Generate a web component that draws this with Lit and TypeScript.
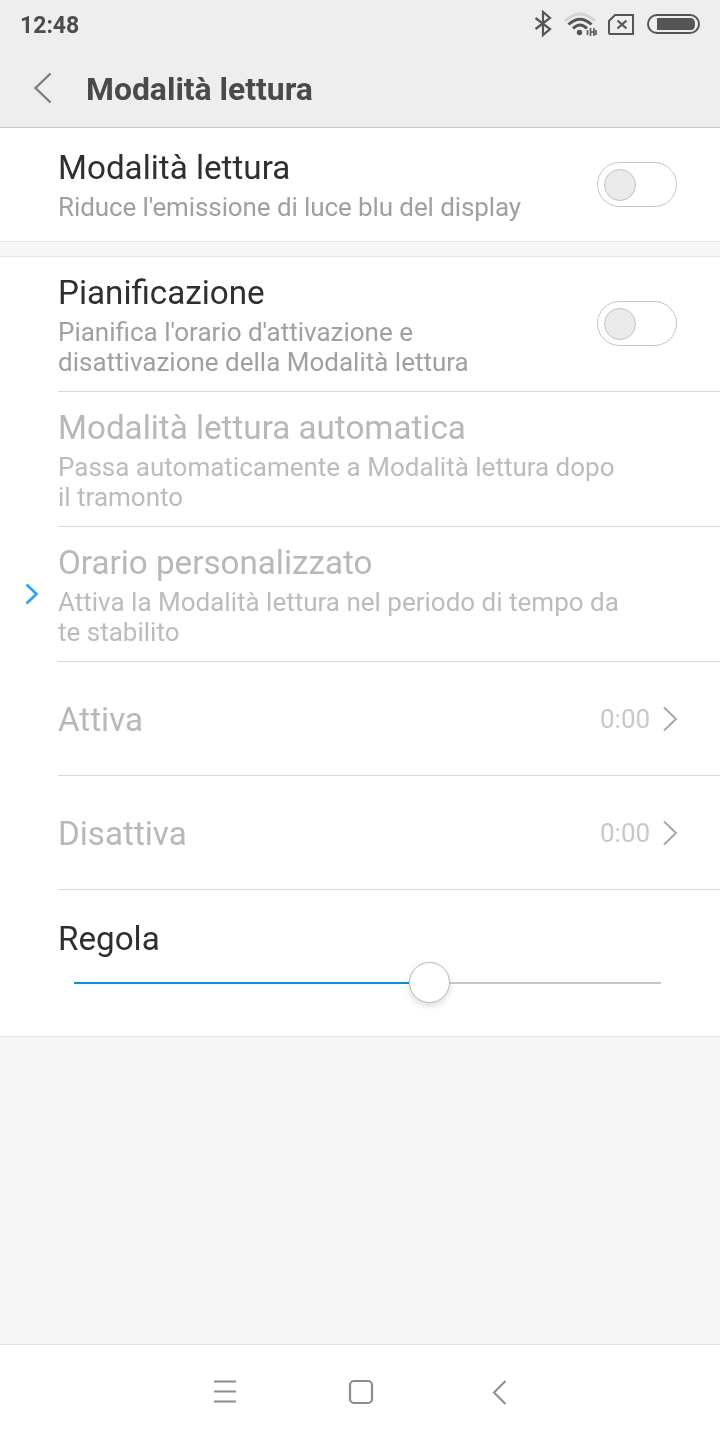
import { LitElement, html, css } from "lit";
import { customElement } from "lit/decorators.js";

const chevron = html`<svg class="chev" width="16" height="26" viewBox="0 0 16 26"><path d="M2 1.500L14 13 2 24.500" fill="none" stroke="#a8a8a8" stroke-width="2"/></svg>`;
const toggle = html`<div class="toggle"><div class="knob"></div></div>`;

@customElement("app-root")
export class AppRoot extends LitElement {
  static styles = css`
    :host { display: flex; flex-direction: column; width: 720px; height: 1440px; background: #f7f7f7; font-family: Roboto, sans-serif; overflow: hidden; }
    .top { height: 127px; background: #eeeeee; border-bottom: 1px solid #c8c8c8; display: flex; flex-direction: column; flex: none; }
    .status { height: 50px; display: flex; align-items: center; padding: 0 20px; justify-content: space-between; }
    .time { font-size: 23px; font-weight: 700; color: #4c4c4c; will-change: transform; }
    .sicons { display: flex; align-items: center; }
    .bar { height: 77px; display: flex; align-items: center; padding-left: 32px; }
    .bar svg { margin-right: 32px; margin-top: -2px; }
    .bar h1 { margin: 0; font-size: 31.900px; font-weight: 700; color: #4a4a4a; will-change: transform; }
    .card { background: #fff; flex: none; }
    .card.a { border-bottom: 1px solid #e6e6e6; }
    .card.b { margin-top: 14px; border-top: 1px solid #e6e6e6; border-bottom: 1px solid #e6e6e6; }
    .row { position: relative; display: flex; align-items: center; padding-left: 58px; padding-right: 43px; box-sizing: border-box; }
    .row::after { content: ""; position: absolute; left: 58px; right: 0; bottom: 0; height: 1px; background: #d9d9d9; }
    .row.last::after { display: none; }
    .text { flex: 1; min-width: 0; will-change: transform; }
    .t { font-size: 33.200px; line-height: 36px; color: #2f2f2f; }
    .regola .t { will-change: transform; }
    .s { font-size: 26px; line-height: 30px; color: #a0a0a0; margin-top: 6px; }
    .tight { letter-spacing: -0.100px; }
    .off .t { color: #b8b8b8; }
    .off .s { color: #bcbcbc; }
    .h113 { height: 113px; }
    .h113 .text { padding-top: 3px; }
    .h135 { height: 135px; padding-bottom: 2px; }
    .h135 .text { padding-top: 5px; }
    .h114 { height: 114px; }
    .h114 .text { padding-top: 2px; }
    .toggle { width: 80px; height: 45px; box-sizing: border-box; border: 1px solid #c6c6c6; border-radius: 23px; background: #fff; display: flex; align-items: center; padding-left: 6px; flex: none; }
    .knob { width: 32px; height: 32px; box-sizing: border-box; border-radius: 50%; background: #ebebeb; border: 1px solid #c2c2c2; }
    .val { font-size: 26px; color: #c8c8c8; margin-right: 12px; will-change: transform; }
    .chev { flex: none; margin-right: -1px; }
    .blue { position: absolute; left: 24px; top: 55px; }
    .regola { height: 146px; display: block; padding-top: 31px; padding-right: 0; }
    .track { display: flex; align-items: center; margin: 5px 59px 0 16px; height: 40px; }
    .on { width: 335px; height: 2px; margin-top: 2px; background: #0a8fdc; }
    .thumb { width: 41px; height: 41px; box-sizing: border-box; border-radius: 50%; background: #fff; border: 1px solid #b8b8b8; box-shadow: 0 3px 6px rgba(0,0,0,.14); flex: none; }
    .rest { flex: 1; height: 2px; margin-top: 2px; background: #c6c6c6; }
    .spacer { flex: 1; }
    .nav { flex: none; height: 95px; background: #fff; border-top: 1px solid #e0e0e0; }
  `;

  render() {
    return html`
      <div class="top">
        <div class="status">
          <span class="time">12:48</span>
          <div class="sicons">
            <svg width="167" height="30" viewBox="0 0 167 30">
              <path d="M2.500 8L17 19 10 25V2L17 8 2.500 19" fill="none" stroke="#555" stroke-width="2.200"/>
              <path d="M32 11Q47 -3 62 11" fill="none" stroke="#d4d4d4" stroke-width="3"/>
              <path d="M35.500 14.500Q47 4 58.500 14.500" fill="none" stroke="#555" stroke-width="3"/>
              <path d="M40 18.500Q47 11.500 54 18.500" fill="none" stroke="#555" stroke-width="3"/>
              <circle cx="46.500" cy="22.500" r="2.700" fill="#555"/>
              <path d="M54.500 20v5M57.500 18v8M57.500 22h4M61 18v8M63 20v5" fill="none" stroke="#555" stroke-width="1.600"/>
              <path d="M76 11L82 5H100V24H77Q76 24 76 23Z" fill="none" stroke="#555" stroke-width="2"/>
              <path d="M84.500 10.500l9 8M93.500 10.500l-9 8" fill="none" stroke="#555" stroke-width="2.200"/>
              <rect x="115" y="5" width="51" height="18" rx="9" fill="none" stroke="#555" stroke-width="2"/>
              <path d="M124 8H158Q162 8 162 14Q162 20 158 20H124Z" fill="#555"/>
            </svg>
          </div>
        </div>
        <div class="bar">
          <svg width="22" height="32" viewBox="0 0 22 32"><path d="M18.500 1.500L3.500 16 18.500 30.500" fill="none" stroke="#7a7a7a" stroke-width="2.200"/></svg>
          <h1>Modalità lettura</h1>
        </div>
      </div>

      <div class="card a">
        <div class="row h113 last">
          <div class="text"><div class="t">Modalità lettura</div><div class="s tight">Riduce l'emissione di luce blu del display</div></div>
          ${toggle}
        </div>
      </div>

      <div class="card b">
        <div class="row h135">
          <div class="text"><div class="t">Pianificazione</div><div class="s">Pianifica l'orario d'attivazione e<br>disattivazione della Modalità lettura</div></div>
          ${toggle}
        </div>
        <div class="row h135 off">
          <div class="text"><div class="t">Modalità lettura automatica</div><div class="s">Passa automaticamente a Modalità lettura dopo<br>il tramonto</div></div>
        </div>
        <div class="row h135 off">
          <svg class="blue" width="16" height="24" viewBox="0 0 16 24"><path d="M2.500 2.500L12.500 12 2.500 21.500" fill="none" stroke="#29a9f5" stroke-width="2.800"/></svg>
          <div class="text"><div class="t">Orario personalizzato</div><div class="s">Attiva la Modalità lettura nel periodo di tempo da<br>te stabilito</div></div>
        </div>
        <div class="row h114 off"><div class="text"><div class="t">Attiva</div></div><span class="val">0:00</span>${chevron}</div>
        <div class="row h114 off"><div class="text"><div class="t">Disattiva</div></div><span class="val">0:00</span>${chevron}</div>
        <div class="row regola last">
          <div class="t">Regola</div>
          <div class="track"><div class="on"></div><div class="thumb"></div><div class="rest"></div></div>
        </div>
      </div>

      <div class="spacer"></div>

      <div class="nav">
        <svg width="720" height="95" viewBox="0 0 720 95">
          <path d="M214 36.500H236M214 46.500H236M214 56.500H236" stroke="#8c8c8c" stroke-width="2" fill="none"/>
          <rect x="350" y="36" width="22" height="22" rx="4" fill="none" stroke="#8c8c8c" stroke-width="2.200"/>
          <path d="M505.500 36L494 47.500 505.500 59" fill="none" stroke="#8c8c8c" stroke-width="2"/>
        </svg>
      </div>
    `;
  }
}
